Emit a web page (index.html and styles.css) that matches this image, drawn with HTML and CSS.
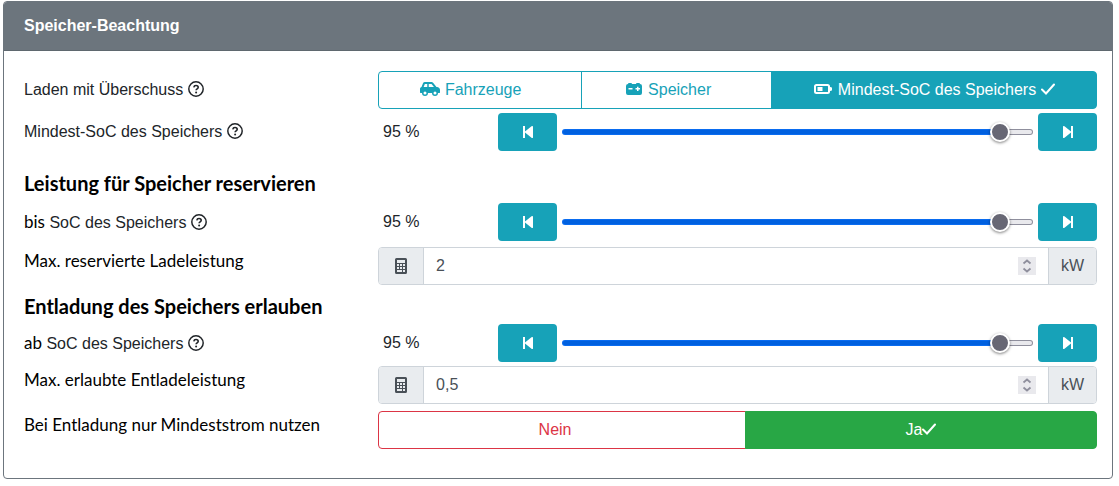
FILE: index.html
```html
<!DOCTYPE html>
<html lang="de">
<head>
    <meta charset="UTF-8">
    <meta name="viewport" content="width=device-width, initial-scale=1.0">
    <title>Speicher-Beachtung</title>
    <link rel="stylesheet" href="styles.css">
</head>
<body>
    <!-- shared icons -->
    <svg class="sprite" aria-hidden="true">
        <symbol id="help" viewBox="0 0 16 16">
            <circle cx="8" cy="8" r="7.2" fill="none" stroke="currentColor" stroke-width="1.5"/>
            <path d="M5.8 6.3c.2-1.2 1-1.800 2.200-1.800 1.300 0 2.200.7 2.200 1.800 0 1.500-2.100 1.500-2.100 2.900" fill="none" stroke="currentColor" stroke-width="1.600"/>
            <circle cx="8.1" cy="11.4" r="1" fill="currentColor"/>
        </symbol>
        <symbol id="car" viewBox="0 0 640 512">
            <path fill="currentColor" fill-rule="evenodd" d="M544 192h-16L419 56a64 64 0 0 0-50-24H155a64 64 0 0 0-59 40L48 195c-28 7-48 32-48 61v112c0 9 7 16 16 16h48a96 96 0 0 0 192 0h128a96 96 0 0 0 192 0h48c9 0 16-7 16-16v-80c0-53-43-96-96-96zM160 432a48 48 0 1 1 0-96 48 48 0 0 1 0 96zm72-240H116l39-96h77v96zm48 0V96h89l77 96H280zm200 240a48 48 0 1 1 0-96 48 48 0 0 1 0 96z"/>
        </symbol>
        <symbol id="car-battery" viewBox="0 0 20 16">
            <path fill="currentColor" fill-rule="evenodd" d="M4 3q0-1 1-1h2q1 0 1 1h4q0-1 1-1h2q1 0 1 1 2 0 2 2v7q0 2-2 2H4q-2 0-2-2V5q0-2 2-2zM4.500 7v1.500h4V7zM13 5.700V7h-1.500v1.500H13V10h1.500V8.500H16V7h-1.500V5.700z"/>
        </symbol>
        <symbol id="battery" viewBox="0 0 20 16">
            <rect x="2" y="4" width="14" height="8" rx="1.500" fill="none" stroke="currentColor" stroke-width="2"/>
            <path fill="currentColor" d="M4.500 6h5v4h-5zM17 6q2 0 2 1v2q0 1-2 1z"/>
        </symbol>
        <symbol id="check" viewBox="0 0 14 16">
            <path fill="none" stroke="currentColor" stroke-width="2" stroke-linecap="round" d="M1 8.500l4 4 8-9"/>
        </symbol>
        <symbol id="step-back" viewBox="0 0 16 16">
            <path fill="currentColor" d="M3 2h2v5.400l6.500-5.200q1.500-.7 1.500.6v10.400q0 1.300-1.500.6L5 8.600V14H3z"/>
        </symbol>
        <symbol id="step-forward" viewBox="0 0 16 16">
            <path fill="currentColor" d="M13 2h-2v5.400L4.500 2.200Q3 1.500 3 2.800v10.400q0 1.300 1.500.6L11 8.600V14h2z"/>
        </symbol>
        <symbol id="calculator" viewBox="0 0 12 16">
            <path fill="currentColor" fill-rule="evenodd" d="M1.500 0h9Q12 0 12 1.500v13q0 1.500-1.500 1.500h-9Q0 16 0 14.500v-13Q0 0 1.500 0zM2 2v3h8V2zM2 6v2h2V6zm3 0v2h2V6zm3 0v2h2V6zM2 9v2h2V9zm3 0v2h2V9zm3 0v2h2V9zM2 12v2h5v-2zm6 0v2h2v-2z"/>
        </symbol>
        <symbol id="spin" viewBox="0 0 18 18">
            <path fill="none" stroke="currentColor" stroke-width="1.800" d="M5.500 6.500L9 3.500l3.500 3M5.500 11.500l3.500 3 3.500-3"/>
        </symbol>
    </svg>

    <form class="card">
        <h1 class="card-header">Speicher-Beachtung</h1>
        <div class="card-body">
            <section class="section">
                <div class="field" role="radiogroup" aria-labelledby="surplus-label">
                    <span class="label" id="surplus-label">Laden mit Überschuss <svg class="icon"><use href="#help"/></svg></span>
                    <div class="btn-group">
                        <label class="btn info"><input type="radio" name="surplus"><svg class="icon icon-wide"><use href="#car"/></svg> Fahrzeuge <svg class="icon icon-check"><use href="#check"/></svg></label>
                        <label class="btn info"><input type="radio" name="surplus"><svg class="icon icon-wide"><use href="#car-battery"/></svg> Speicher <svg class="icon icon-check"><use href="#check"/></svg></label>
                        <label class="btn info"><input type="radio" name="surplus" checked><svg class="icon icon-wide"><use href="#battery"/></svg> Mindest-SoC des Speichers <svg class="icon icon-check"><use href="#check"/></svg></label>
                    </div>
                </div>
                <div class="field">
                    <label class="label" for="min-soc">Mindest-SoC des Speichers <svg class="icon"><use href="#help"/></svg></label>
                    <div class="slider">
                        <output class="value" for="min-soc">95 %</output>
                        <button class="step" type="button" aria-label="Verringern"><svg class="icon"><use href="#step-back"/></svg></button>
                        <input class="range" id="min-soc" type="range" value="95" style="--fill: 95%">
                        <button class="step" type="button" aria-label="Erhöhen"><svg class="icon"><use href="#step-forward"/></svg></button>
                    </div>
                </div>
            </section>

            <section class="section reserve">
                <h2 class="heading">Leistung für Speicher reservieren</h2>
                <div class="field">
                    <label class="label" for="reserve-soc"><span class="prefix">bis</span> SoC des Speichers <svg class="icon"><use href="#help"/></svg></label>
                    <div class="slider">
                        <output class="value" for="reserve-soc">95 %</output>
                        <button class="step" type="button" aria-label="Verringern"><svg class="icon"><use href="#step-back"/></svg></button>
                        <input class="range" id="reserve-soc" type="range" value="95" style="--fill: 95%">
                        <button class="step" type="button" aria-label="Erhöhen"><svg class="icon"><use href="#step-forward"/></svg></button>
                    </div>
                </div>
                <div class="field">
                    <label class="label label-top" for="reserve-power">Max. reservierte Ladeleistung</label>
                    <div class="input-group">
                        <span class="addon"><svg class="icon icon-calc"><use href="#calculator"/></svg></span>
                        <input class="number" id="reserve-power" type="text" inputmode="decimal" value="2">
                        <svg class="spin"><use href="#spin"/></svg>
                        <span class="addon addon-end">kW</span>
                    </div>
                </div>
            </section>

            <section class="section discharge">
                <h2 class="heading">Entladung des Speichers erlauben</h2>
                <div class="field">
                    <label class="label" for="discharge-soc"><span class="prefix">ab</span> SoC des Speichers <svg class="icon"><use href="#help"/></svg></label>
                    <div class="slider">
                        <output class="value" for="discharge-soc">95 %</output>
                        <button class="step" type="button" aria-label="Verringern"><svg class="icon"><use href="#step-back"/></svg></button>
                        <input class="range" id="discharge-soc" type="range" value="95" style="--fill: 95%">
                        <button class="step" type="button" aria-label="Erhöhen"><svg class="icon"><use href="#step-forward"/></svg></button>
                    </div>
                </div>
                <div class="field">
                    <label class="label label-top" for="discharge-power">Max. erlaubte Entladeleistung</label>
                    <div class="input-group">
                        <span class="addon"><svg class="icon icon-calc"><use href="#calculator"/></svg></span>
                        <input class="number" id="discharge-power" type="text" inputmode="decimal" value="0,5">
                        <svg class="spin"><use href="#spin"/></svg>
                        <span class="addon addon-end">kW</span>
                    </div>
                </div>
            </section>

            <section class="section minimum">
                <div class="field" role="radiogroup" aria-labelledby="minimum-label">
                    <span class="label label-top" id="minimum-label">Bei Entladung nur Mindeststrom nutzen</span>
                    <div class="btn-group">
                        <label class="btn danger"><input type="radio" name="minimum">Nein<svg class="icon icon-check"><use href="#check"/></svg></label>
                        <label class="btn success"><input type="radio" name="minimum" checked>Ja<svg class="icon icon-check"><use href="#check"/></svg></label>
                    </div>
                </div>
            </section>
        </div>
    </form>
</body>
</html>
```
FILE: styles.css
```css
* {
    box-sizing: border-box;
}

body {
    margin: 0;
    padding: 1px 6px 7px 3px;
    background-color: #fff;
    color: #212529;
    font-family: "Liberation Sans", Arial, sans-serif;
    font-size: 16px;
    line-height: 24px;
}

.sprite {
    display: none;
}

.card {
    border: 1px solid #6c757d;
    border-radius: 4px;
    overflow: hidden;
}

.card-header {
    margin: 0;
    padding: 12px 20px;
    border-bottom: 1px solid #5f686f;
    background-color: #6c757d;
    color: #fff;
    font-size: 16px;
    font-weight: bold;
}

.card-body {
    padding: 20px 15px 29px 20px;
}

.section {
    display: flex;
    flex-direction: column;
    gap: 4px;
}

.reserve {
    gap: 6px;
}

.minimum {
    margin-top: 7px;
}

.heading {
    margin: 9px 0 2px;
    color: #000;
    font-family: Lato, sans-serif;
    font-size: 20px;
    font-weight: bold;
}

.reserve .heading {
    margin-top: 20px;
}

.field {
    display: grid;
    grid-template-columns: 33% 1fr;
    align-items: center;
}

.label-top {
    align-self: start;
    line-height: 28px;
}

.label-top, .prefix {
    color: #000;
    font-family: Lato, sans-serif;
    font-size: 17px;
}

.icon {
    width: 16px;
    height: 16px;
    vertical-align: -2px;
}

.icon-wide {
    width: 20px;
}

.icon-check {
    width: 14px;
}

.icon-calc {
    width: 12px;
}

.btn-group {
    display: flex;
}

.btn {
    position: relative;
    flex: 1 1 auto;
    padding: 6px 12px;
    border: 1px solid;
    text-align: center;
    cursor: pointer;
}

.btn + .btn {
    margin-left: -1px;
}

.btn:first-child {
    border-radius: 4px 0 0 4px;
}

.btn:last-child {
    border-radius: 0 4px 4px 0;
}

.btn input {
    position: absolute;
    opacity: 0;
}

/* the check mark keeps its space while the option is off */
.btn .icon-check {
    visibility: hidden;
}

.btn:has(:checked) .icon-check {
    visibility: visible;
}

.info {
    color: #17a2b8;
}

.danger {
    color: #dc3545;
}

.success {
    color: #28a745;
}

.btn:has(:checked) {
    color: #fff;
}

.info:has(:checked) {
    border-color: #17a2b8;
    background-color: #17a2b8;
}

.success:has(:checked) {
    border-color: #28a745;
    background-color: #28a745;
}

.slider {
    display: flex;
    align-items: center;
    gap: 5px;
}

.value {
    width: 16%;
    padding-left: 5px;
}

.step {
    width: 59px;
    height: 38px;
    padding: 0;
    border: 0;
    border-radius: 4px;
    background-color: #17a2b8;
    color: #fff;
}

.range {
    flex: 1;
    min-width: 0;
    height: 24px;
    margin: 0;
    background: none;
    appearance: none;
}

.range::-webkit-slider-runnable-track {
    height: 6px;
    border: 1px solid transparent;
    border-radius: 3px;
    background:
        linear-gradient(to right, #0060df var(--fill), #e9e9ed var(--fill)) padding-box,
        linear-gradient(to right, #0a6cf0 var(--fill), #8f8f9d var(--fill)) border-box;
}

.range::-webkit-slider-thumb {
    width: 20px;
    height: 20px;
    margin-top: -8px;
    border: 2px solid #fff;
    border-radius: 50%;
    background-color: #676774;
    box-shadow: 0 1px 3px rgba(0, 0, 0, 0.5);
    appearance: none;
}

.input-group {
    display: flex;
    align-items: center;
    height: 38px;
    border: 1px solid #ced4da;
    border-radius: 4px;
    overflow: hidden;
}

.addon {
    display: flex;
    align-items: center;
    height: 100%;
    padding: 0 16px;
    border-right: 1px solid #ced4da;
    background-color: #e9ecef;
    color: #495057;
}

.addon-end {
    padding: 0 12px;
    border-right: 0;
    border-left: 1px solid #ced4da;
}

.number {
    flex: 1;
    min-width: 0;
    padding: 0 12px;
    border: 0;
    color: #495057;
    font: inherit;
}

.spin {
    width: 18px;
    height: 18px;
    margin-right: 12px;
    background-color: #e9e9ed;
    color: #8f8f9d;
}
```
